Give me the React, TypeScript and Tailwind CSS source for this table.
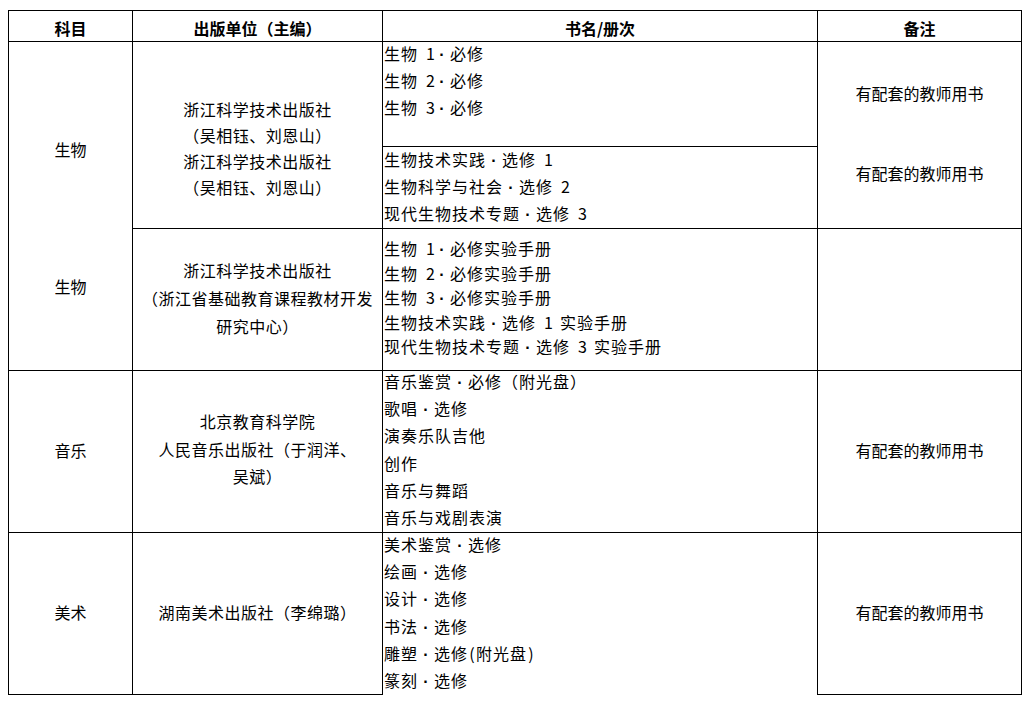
import React from "react";

const C = "border-r border-b border-black";

function T({ s }: { s: string }) {
  const parts: React.ReactNode[] = [];
  let buf = "";
  const flush = (k: number) => {
    if (buf) {
      parts.push(<React.Fragment key={"t" + k}>{buf}</React.Fragment>);
      buf = "";
    }
  };
  Array.from(s).forEach((ch, i) => {
    if (ch === "·") {
      flush(i);
      parts.push(
        <span key={"d" + i} className="inline-block w-[16px] text-center leading-none tracking-normal font-['Liberation_Sans',sans-serif] font-bold">
          ·
        </span>
      );
    } else if (/[ 0-9()]/.test(ch)) {
      flush(i);
      parts.push(
        <span key={"h" + i} className="inline-block w-[8px] text-center tracking-normal">
          {ch === " " ? "\u00a0" : ch}
        </span>
      );
    } else {
      buf += ch;
    }
  });
  flush(s.length + 1);
  return <div className="whitespace-nowrap">{parts}</div>;
}

function Lines({ items }: { items: string[] }) {
  return (
    <>
      {items.map((t, i) => (
        <T key={i} s={t} />
      ))}
    </>
  );
}

export default function App() {
  return (
    <div className="w-[1032px] h-[703px] bg-white pt-[10px] pl-[8px] text-[16px] text-[#000] font-['Noto_Sans_CJK_SC','Noto_Sans_CJK_JP',sans-serif]">
      <div className="grid w-max grid-cols-[124px_250px_435px_204px] grid-rows-[31px_105px_82px_142px_162px_162px] border-l border-t border-black">
        {/* header */}
        <div className={`${C} col-start-1 row-start-1 flex items-center justify-center pt-[4px] font-bold leading-none`}>科目</div>
        <div className={`${C} col-start-2 row-start-1 flex items-center justify-center pt-[4px] font-bold leading-none`}>出版单位（主编）</div>
        <div className={`${C} col-start-3 row-start-1 flex items-center justify-center pt-[4px] font-bold leading-none`}>书名/册次</div>
        <div className={`${C} col-start-4 row-start-1 flex items-center justify-center pt-[4px] font-bold leading-none`}>备注</div>

        {/* 生物 merged col 1 */}
        <div className={`${C} col-start-1 row-start-2 row-span-3 flex flex-col items-center pt-[94px] gap-[110px] leading-[27px]`}>
          <div>生物</div>
          <div>生物</div>
        </div>

        {/* col 2, biology block 1 */}
        <div className={`${C} col-start-2 row-start-2 row-span-2 flex flex-col items-center pt-[54px] leading-[26px] tracking-[0.5px]`}>
          <Lines items={["浙江科学技术出版社", "（吴相钰、刘恩山）", "浙江科学技术出版社", "（吴相钰、刘恩山）"]} />
        </div>

        {/* col 3 sub cells */}
        <div className={`${C} col-start-3 row-start-2 pl-[1px] leading-[27px] tracking-[1px]`}>
          <div className="-mt-[2px] flex flex-col">
            <Lines items={["生物 1·必修", "生物 2·必修", "生物 3·必修"]} />
          </div>
        </div>
        <div className={`${C} col-start-3 row-start-3 pl-[1px] leading-[27px] tracking-[1px]`}>
          <div className="-mt-[1px] flex flex-col">
            <Lines items={["生物技术实践·选修 1", "生物科学与社会·选修 2", "现代生物技术专题·选修 3"]} />
          </div>
        </div>

        {/* col 4 merged */}
        <div className={`${C} col-start-4 row-start-2 row-span-2 flex flex-col items-center pt-[38px] gap-[53px] leading-[27px]`}>
          <div>有配套的教师用书</div>
          <div>有配套的教师用书</div>
        </div>

        {/* biology block 2 */}
        <div className={`${C} col-start-2 row-start-4 flex flex-col items-center justify-center pb-[4px] leading-[28px] tracking-[0.5px]`}>
          <Lines items={["浙江科学技术出版社", "（浙江省基础教育课程教材开发", "研究中心）"]} />
        </div>
        <div className={`${C} col-start-3 row-start-4 flex flex-col justify-center pb-[4px] leading-[24.5px] pl-[1px] tracking-[1px]`}>
          <Lines
            items={[
              "生物 1·必修实验手册",
              "生物 2·必修实验手册",
              "生物 3·必修实验手册",
              "生物技术实践·选修 1 实验手册",
              "现代生物技术专题·选修 3 实验手册",
            ]}
          />
        </div>
        <div className={`${C} col-start-4 row-start-4`} />

        {/* music */}
        <div className={`${C} col-start-1 row-start-5 flex items-center justify-center pb-[4px]`}>音乐</div>
        <div className={`${C} col-start-2 row-start-5 flex flex-col items-center justify-center pb-[4px] leading-[27.5px] tracking-[0.5px]`}>
          <Lines items={["北京教育科学院", "人民音乐出版社（于润洋、", "吴斌）"]} />
        </div>
        <div className={`${C} col-start-3 row-start-5 pl-[1px] leading-[27.2px] tracking-[1px]`}>
          <div className="-mt-[3px] flex flex-col">
            <Lines items={["音乐鉴赏·必修（附光盘）", "歌唱·选修", "演奏乐队吉他", "创作", "音乐与舞蹈", "音乐与戏剧表演"]} />
          </div>
        </div>
        <div className={`${C} col-start-4 row-start-5 flex items-center justify-center pb-[4px]`}>有配套的教师用书</div>

        {/* art */}
        <div className={`${C} col-start-1 row-start-6 flex items-center justify-center pb-[4px]`}>美术</div>
        <div className={`${C} col-start-2 row-start-6 flex items-center justify-center pb-[4px] whitespace-nowrap tracking-[0.5px]`}>湖南美术出版社（李绵璐）</div>
        <div className="border-r border-black col-start-3 row-start-6 pl-[1px] leading-[27.2px] tracking-[1px]">
          <div className="-mt-[2px] flex flex-col">
            <Lines items={["美术鉴赏·选修", "绘画·选修", "设计·选修", "书法·选修", "雕塑·选修(附光盘)", "篆刻·选修"]} />
          </div>
        </div>
        <div className={`${C} col-start-4 row-start-6 flex items-center justify-center pb-[4px]`}>有配套的教师用书</div>
      </div>
    </div>
  );
}
